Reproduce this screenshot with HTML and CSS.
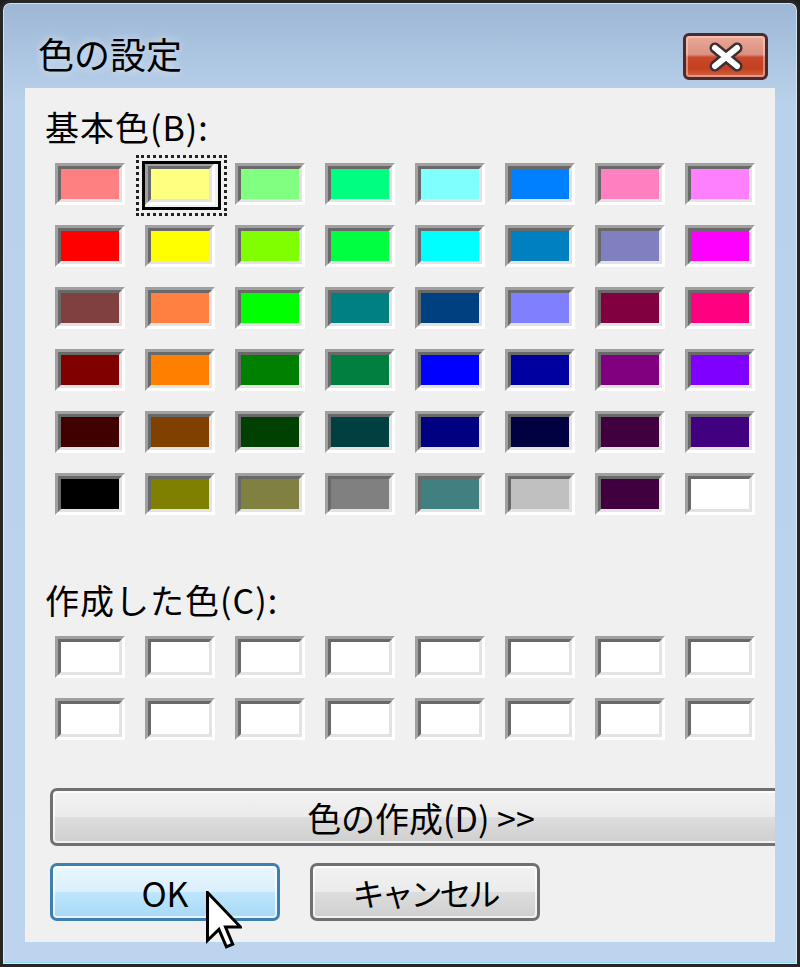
FILE: index.html
```html
<!DOCTYPE html>
<html lang="ja">
<head>
    <meta charset="UTF-8">
    <title>色の設定</title>
    <link rel="stylesheet" href="styles.css">
</head>
<body>
    <div class="window">
        <div class="titlebar">
            <span class="title">色の設定</span>
            <button class="close">
                <svg width="40" height="30" viewBox="0 0 40 30">
                    <path d="M9 6 L31 24 M31 6 L9 24" stroke="#3c3030" stroke-width="11" stroke-linecap="round"/>
                    <path d="M9 6 L31 24 M31 6 L9 24" stroke="#ffffff" stroke-width="6" stroke-linecap="round"/>
                </svg>
            </button>
        </div>
        <div class="client">
            <div class="label">基本色(B):</div>
            <div class="swatches">
                <span class="swatch"><i style="background:#ff8080"></i></span>
                <span class="swatch sel"><i style="background:#ffff80"></i></span>
                <span class="swatch"><i style="background:#80ff80"></i></span>
                <span class="swatch"><i style="background:#00ff80"></i></span>
                <span class="swatch"><i style="background:#80ffff"></i></span>
                <span class="swatch"><i style="background:#0080ff"></i></span>
                <span class="swatch"><i style="background:#ff80c0"></i></span>
                <span class="swatch"><i style="background:#ff80ff"></i></span>

                <span class="swatch"><i style="background:#ff0000"></i></span>
                <span class="swatch"><i style="background:#ffff00"></i></span>
                <span class="swatch"><i style="background:#80ff00"></i></span>
                <span class="swatch"><i style="background:#00ff40"></i></span>
                <span class="swatch"><i style="background:#00ffff"></i></span>
                <span class="swatch"><i style="background:#0080c0"></i></span>
                <span class="swatch"><i style="background:#8080c0"></i></span>
                <span class="swatch"><i style="background:#ff00ff"></i></span>

                <span class="swatch"><i style="background:#804040"></i></span>
                <span class="swatch"><i style="background:#ff8040"></i></span>
                <span class="swatch"><i style="background:#00ff00"></i></span>
                <span class="swatch"><i style="background:#008080"></i></span>
                <span class="swatch"><i style="background:#004080"></i></span>
                <span class="swatch"><i style="background:#8080ff"></i></span>
                <span class="swatch"><i style="background:#800040"></i></span>
                <span class="swatch"><i style="background:#ff0080"></i></span>

                <span class="swatch"><i style="background:#800000"></i></span>
                <span class="swatch"><i style="background:#ff8000"></i></span>
                <span class="swatch"><i style="background:#008000"></i></span>
                <span class="swatch"><i style="background:#008040"></i></span>
                <span class="swatch"><i style="background:#0000ff"></i></span>
                <span class="swatch"><i style="background:#0000a0"></i></span>
                <span class="swatch"><i style="background:#800080"></i></span>
                <span class="swatch"><i style="background:#8000ff"></i></span>

                <span class="swatch"><i style="background:#400000"></i></span>
                <span class="swatch"><i style="background:#804000"></i></span>
                <span class="swatch"><i style="background:#004000"></i></span>
                <span class="swatch"><i style="background:#004040"></i></span>
                <span class="swatch"><i style="background:#000080"></i></span>
                <span class="swatch"><i style="background:#000040"></i></span>
                <span class="swatch"><i style="background:#400040"></i></span>
                <span class="swatch"><i style="background:#400080"></i></span>

                <span class="swatch"><i style="background:#000000"></i></span>
                <span class="swatch"><i style="background:#808000"></i></span>
                <span class="swatch"><i style="background:#808040"></i></span>
                <span class="swatch"><i style="background:#808080"></i></span>
                <span class="swatch"><i style="background:#408080"></i></span>
                <span class="swatch"><i style="background:#c0c0c0"></i></span>
                <span class="swatch"><i style="background:#400040"></i></span>
                <span class="swatch"><i style="background:#ffffff"></i></span>
            </div>

            <div class="label custom-label">作成した色(C):</div>
            <div class="swatches custom">
                <span class="swatch"><i></i></span>
                <span class="swatch"><i></i></span>
                <span class="swatch"><i></i></span>
                <span class="swatch"><i></i></span>
                <span class="swatch"><i></i></span>
                <span class="swatch"><i></i></span>
                <span class="swatch"><i></i></span>
                <span class="swatch"><i></i></span>
                <span class="swatch"><i></i></span>
                <span class="swatch"><i></i></span>
                <span class="swatch"><i></i></span>
                <span class="swatch"><i></i></span>
                <span class="swatch"><i></i></span>
                <span class="swatch"><i></i></span>
                <span class="swatch"><i></i></span>
                <span class="swatch"><i></i></span>
            </div>

            <button class="btn define">色の作成(D) &gt;&gt;</button>
            <div class="actions">
                <button class="btn ok">OK</button>
                <button class="btn cancel">キャンセル</button>
            </div>
        </div>
    </div>

    <svg class="cursor" width="36" height="60" viewBox="0 0 12 20">
        <path d="M0.5 0.5 V16.5 L4.3 12.8 L6.8 18.6 L8.9 17.7 L6.5 12 H11.5 Z" fill="#ffffff" stroke="#000000" stroke-width="1" stroke-linejoin="miter"/>
    </svg>
</body>
</html>
```

FILE: styles.css
```css
* {
    box-sizing: border-box;
}
body {
    margin: 0;
    width: 800px;
    height: 967px;
    position: relative;
    font-family: "Noto Sans CJK JP", "Noto Sans", sans-serif;
    color: #000;
    background: #1e1e1e;
}
.window {
    width: 800px;
    height: 967px;
    border: 3px solid #262626;
    border-radius: 10px 10px 0 0;
    padding: 0 22px 22px;
    background: linear-gradient(#9db7d5 0, #abc4e0 50px, #b9d1ea 100px, #bcd4ed 100%);
    box-shadow: inset 0 0 0 1px rgba(255, 255, 255, 0.55), inset 0 -3px 0 -1px #8fd8f0;
}
.titlebar {
    height: 85px;
    display: flex;
    justify-content: space-between;
    align-items: flex-start;
    padding: 0 7px 0 13px;
}
.title {
    font-size: 36px;
    line-height: 44px;
    margin-top: 28px;
    text-shadow: 0 0 10px rgba(255, 255, 255, 0.7);
}
.close {
    margin-top: 30px;
    width: 85px;
    height: 47px;
    padding: 0;
    border: 3px solid #4a2a2e;
    border-radius: 6px;
    background: linear-gradient(#eaa898 0, #dc9180 45%, #c9482c 52%, #c3411f 80%, #d2674a 100%);
    box-shadow: inset 0 0 0 2px rgba(255, 220, 210, 0.45);
    display: flex;
    align-items: center;
    justify-content: center;
}
.client {
    height: 854px;
    background: #f0f0f0;
    padding: 19px 0 0 20px;
    overflow: hidden;
}
.label {
    font-size: 34px;
    line-height: 40px;
    letter-spacing: 1px;
}
.swatches {
    display: grid;
    grid-template-columns: repeat(8, 70px);
    grid-auto-rows: 42px;
    gap: 20px;
    margin: 16px 0 0 10px;
}
.swatch {
    display: block;
    position: relative;
    border: 3px solid;
    border-color: #a0a0a0 #ffffff #ffffff #a0a0a0;
}
.swatch i {
    display: block;
    height: 100%;
    border: 3px solid;
    border-color: #696969 #e3e3e3 #e3e3e3 #696969;
    background: #ffffff;
}
.swatch.sel::before {
    content: "";
    position: absolute;
    top: -5px;
    right: -9px;
    bottom: -8px;
    left: -6px;
    border: 3px solid #000;
}
.swatch.sel::after {
    content: "";
    position: absolute;
    top: -11px;
    right: -15px;
    bottom: -14px;
    left: -12px;
    border: 3px dotted #222;
}
.custom-label {
    margin-top: 65px;
}
.btn {
    display: block;
    height: 58px;
    padding: 0;
    font-family: "Noto Sans CJK JP", "Noto Sans", sans-serif;
    font-size: 34px;
    color: #000;
    border: 3px solid #707070;
    border-radius: 7px;
    background: linear-gradient(#f2f2f2 0, #ebebeb 50%, #dddddd 51%, #cfcfcf 100%);
    box-shadow: inset 0 0 0 2px rgba(255, 255, 255, 0.7);
}
.define {
    margin: 48px 0 0 5px;
    width: 742px;
}
.actions {
    display: flex;
    gap: 30px;
    margin: 17px 0 0 5px;
}
.ok,
.cancel {
    width: 230px;
}
.ok {
    border-color: #3c7fb1;
    background: linear-gradient(#eaf6fd 0, #d9f0fc 50%, #bee6fd 51%, #a7d9f5 100%);
}
.cancel {
    font-size: 32px;
    letter-spacing: -3px;
}
.cursor {
    position: absolute;
    left: 206px;
    top: 891px;
}
```
